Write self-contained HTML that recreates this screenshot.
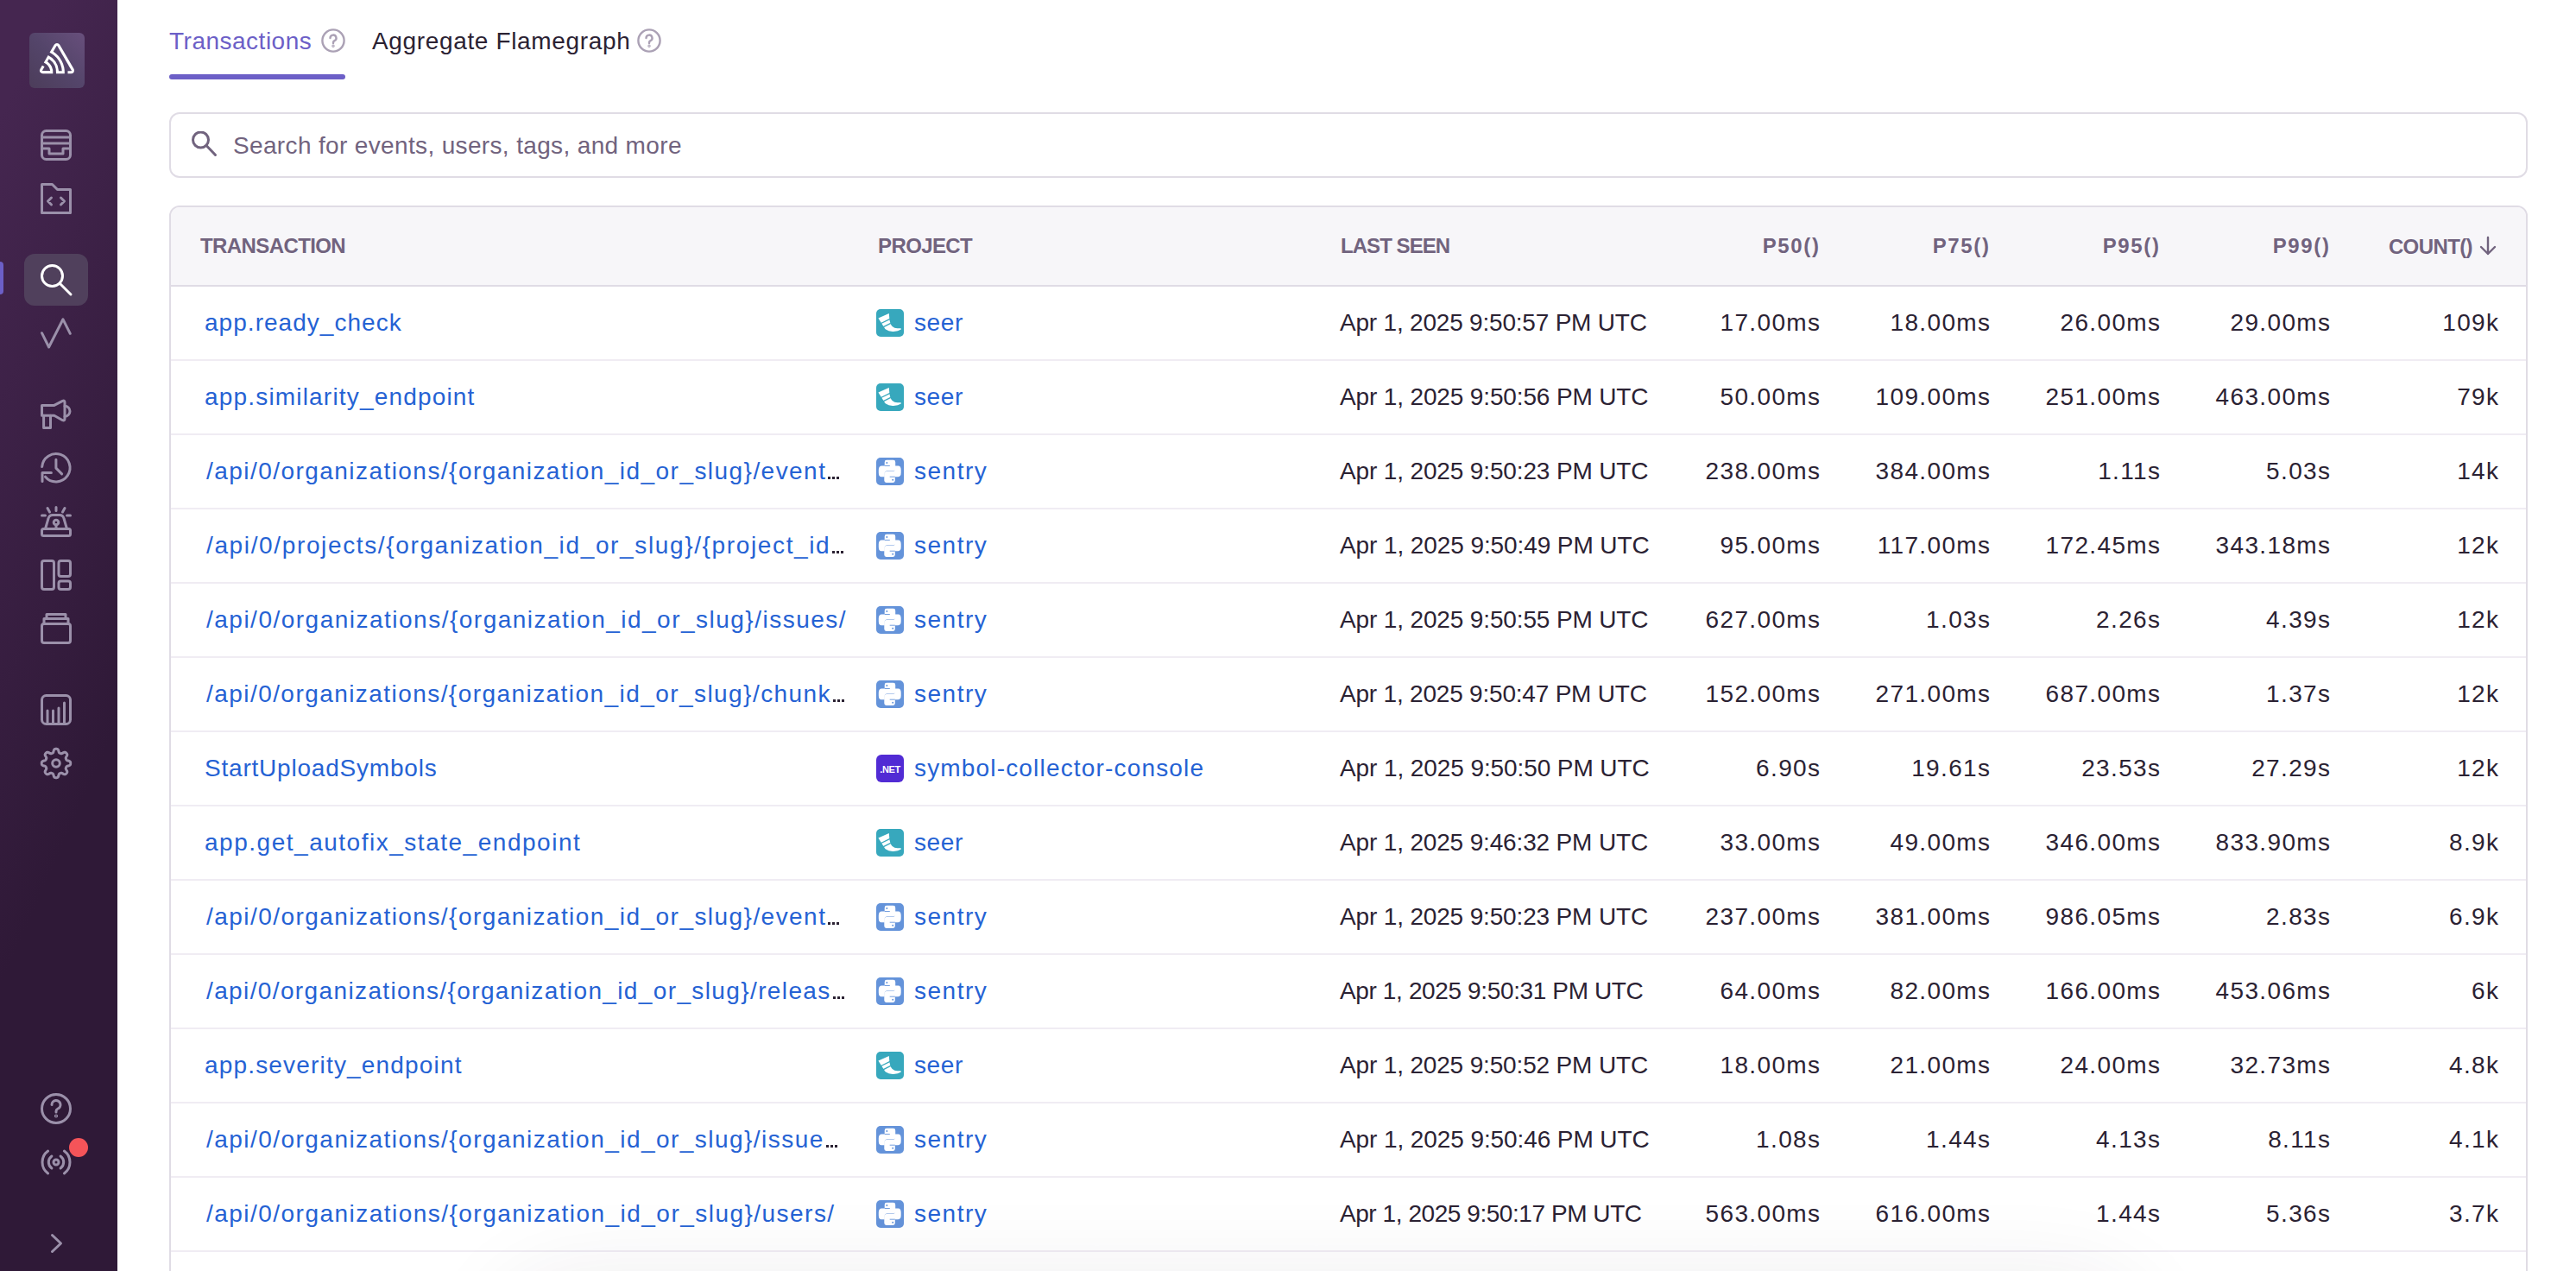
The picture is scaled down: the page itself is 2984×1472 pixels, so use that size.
<!DOCTYPE html>
<html><head><meta charset="utf-8">
<style>
*{box-sizing:border-box;margin:0;padding:0}
html,body{width:2984px;height:1472px;overflow:hidden;background:#fff;font-family:"Liberation Sans",sans-serif;}
@media (max-width:2200px){html{zoom:0.5}}
#sb{position:absolute;left:0;top:0;width:136px;height:1472px;overflow:hidden;background:linear-gradient(294.17deg,#2f1937 35.57%,#452650 92.42%);}
#sb .ic{position:absolute;left:47px;width:36px;height:36px;}
#sb svg{display:block;overflow:visible}
.tab{position:absolute;font-size:28px;line-height:28px;white-space:nowrap}
.help{position:absolute}
#search{position:absolute;left:196px;top:130px;width:2732px;height:76px;border:2px solid #E0DCE5;border-radius:12px;background:#fff}
#search .ph{position:absolute;left:72px;top:17px;font-size:28px;line-height:40px;color:#71637E;white-space:nowrap;letter-spacing:0.35px}
#tbl{position:absolute;left:196px;top:238px;width:2732px;height:1400px;border:2px solid #E0DCE5;border-radius:12px;overflow:hidden}
#hdr{position:absolute;left:0;top:0;width:100%;height:92px;background:#F7F6F9;border-bottom:2px solid #E0DCE5}
.h{position:absolute;top:33px;font-size:24px;line-height:24px;font-weight:700;color:#71637E;white-space:nowrap;letter-spacing:-0.6px}
.row{position:absolute;left:0;width:100%;height:86px;border-bottom:2px solid #F0ECF3}
.pi{position:absolute;top:26px;width:32px;height:32px}
.pi svg{display:block}
.c{position:absolute;top:22px;font-size:28px;line-height:40px;white-space:nowrap;color:#2B2233}
.lnk{color:#2562D4}

.ell{display:inline-block;width:14px;height:3px;margin-left:2px;letter-spacing:0;background:repeating-linear-gradient(90deg,#2B2233 0 3px,transparent 3px 5.2px)}
.date{letter-spacing:-0.25px}
.num{letter-spacing:1.35px;margin-right:-1.35px}
</style></head><body>
<div id="sb"><div style="position:absolute;left:34px;top:38px;width:64px;height:64px;border-radius:6px;background:linear-gradient(to top right,#4C3D5A 0%,#54456A 50%,#684F7C 100%)"></div><svg style="position:absolute;left:46px;top:50px" width="40" height="35.2" viewBox="0 0 50 44"><path fill="#fff" d="M29,2.26a4.67,4.67,0,0,0-8,0L14.42,13.53A32.21,32.21,0,0,1,32.17,40.19H27.55A27.68,27.68,0,0,0,12.09,17.47L6,28a15.92,15.92,0,0,1,9.23,12.170H4.62A.76.76,0,0,1,4,39.06l2.94-5a10.74,10.74,0,0,0-3.36-1.9l-2.91,5a4.54,4.54,0,0,0,1.690,6.24A4.66,4.66,0,0,0,4.62,44H19.15a19.4,19.4,0,0,0-8-17.31l2.31-4A23.87,23.87,0,0,1,23.76,44H36.07a35.88,35.88,0,0,0-16.41-31.8l4.67-8a.77.77,0,0,1,1.05-.27c.53.29,20.290,34.77,20.66,35.17a.76.76,0,0,1-.68,1.13H40.6q.09,1.91,0,3.81h4.78A4.59,4.59,0,0,0,50,39.43a4.49,4.49,0,0,0-.62-2.28Z"/></svg><div class="ic" style="top:150px;left:47px;width:36px;height:36px"><svg width="36" height="36" viewBox="0 0 36 36" fill="none" stroke="#9B90AA" stroke-width="3" stroke-linecap="round" stroke-linejoin="round"><rect x="1.5" y="1.5" width="33" height="33" rx="5"/><path d="M1.5 9h33M1.5 16h33M1.5 22h8.5v6h16v-6h8.5"/></svg></div><div class="ic" style="top:212px;left:47px;width:36px;height:36px"><svg width="36" height="36" viewBox="0 0 36 36" fill="none" stroke="#9B90AA" stroke-width="3" stroke-linecap="round" stroke-linejoin="round"><path d="M1.5 34.5V1.5h12l6 6h15v27z"/><path d="M12.5 17l-4 4 4 4M23.5 17l4 4-4 4"/></svg></div><div style="position:absolute;left:28px;top:294px;width:74px;height:60px;border-radius:12px;background:#50405C"></div><div style="position:absolute;left:-4px;top:303px;width:8px;height:38px;border-radius:4px;background:#6C5FC7"></div><div class="ic" style="top:306px;left:47px"><svg width="36" height="36" viewBox="0 0 36 36" fill="none" stroke="#fff" stroke-width="3" stroke-linecap="round"><circle cx="13.5" cy="13.5" r="12"/><path d="M22.5 22.5l12.5 12.5"/></svg></div><div class="ic" style="top:368px;left:47px;width:36px;height:36px"><svg width="36" height="36" viewBox="0 0 36 36" fill="none" stroke="#9B90AA" stroke-width="3" stroke-linecap="round" stroke-linejoin="round"><path d="M1.5 17.7L9.6 34L26 1.8L34.3 18.3"/></svg></div><div class="ic" style="top:462px;left:47px;width:36px;height:36px"><svg width="36" height="36" viewBox="0 0 36 36" fill="none" stroke="#9B90AA" stroke-width="3" stroke-linecap="round" stroke-linejoin="round"><path d="M1.5 7.4H15.8L25.5 2.4Q28 1.4 28 4V23Q28 25.6 25.5 24.7L15.8 19.2H1.5Z"/><path d="M28 8.2A6 6 0 0 1 28 20.2"/><path d="M3.6 19.2V33.5H11.5V19.2"/></svg></div><div class="ic" style="top:524px;left:47px;width:36px;height:36px"><svg width="36" height="36" viewBox="0 0 36 36" fill="none" stroke="#9B90AA" stroke-width="3" stroke-linecap="round" stroke-linejoin="round"><path d="M1.7 16.5A16.2 16.2 0 1 1 5.5 28.2"/><path d="M2 33.5V23.5H12.4"/><path d="M17.9 8.2V18.1L24.6 24.9"/></svg></div><div class="ic" style="top:586px;left:47px;width:36px;height:36px"><svg width="36" height="36" viewBox="0 0 36 36" fill="none" stroke="#9B90AA" stroke-width="3" stroke-linecap="round" stroke-linejoin="round"><path d="M1.5 11h4M30.5 11h4M8 2.5l2.5 4.5M28 2.5l-2.5 4.5M18 1.5v4"/><path d="M5.5 26.5L9 14.5Q10 10.5 14 10.5h8q4 0 5 4l3.5 12"/><rect x="1.5" y="26.5" width="33" height="8" rx="2"/><circle cx="18" cy="19" r="2.8"/><path d="M18 21.8V26.5"/></svg></div><div class="ic" style="top:648px;left:47px;width:36px;height:36px"><svg width="36" height="36" viewBox="0 0 36 36" fill="none" stroke="#9B90AA" stroke-width="3" stroke-linecap="round" stroke-linejoin="round"><rect x="1.5" y="1.5" width="14" height="33" rx="2.5"/><rect x="21" y="1.5" width="13.5" height="18" rx="2.5"/><rect x="21" y="25" width="13.5" height="9.5" rx="2.5"/></svg></div><div class="ic" style="top:710px;left:47px;width:36px;height:36px"><svg width="36" height="36" viewBox="0 0 36 36" fill="none" stroke="#9B90AA" stroke-width="3" stroke-linecap="round" stroke-linejoin="round"><rect x="1.5" y="12.5" width="33" height="22" rx="2.5"/><path d="M4 12.5V6.5h28v6M7 6.5V1.5h22v5"/></svg></div><div class="ic" style="top:804px;left:47px;width:36px;height:36px"><svg width="36" height="36" viewBox="0 0 36 36" fill="none" stroke="#9B90AA" stroke-width="3" stroke-linecap="round" stroke-linejoin="round"><rect x="1.5" y="1.5" width="33" height="33" rx="5"/><path d="M8 33v-14M14.5 33v-14M21 33v-17M27.5 33V10"/></svg></div><div class="ic" style="top:866px;left:47px;width:36px;height:36px"><svg width="36" height="36" viewBox="0 0 36 36" fill="none" stroke="#9B90AA" stroke-width="3" stroke-linecap="round" stroke-linejoin="round"><path d="M18.00 1.30 L18.44 1.32 L18.87 1.36 L19.30 1.46 L19.72 1.64 L20.11 1.95 L20.46 2.47 L20.74 3.24 L20.95 4.12 L21.15 4.89 L21.37 5.43 L21.62 5.78 L21.90 6.01 L22.19 6.18 L22.48 6.32 L22.78 6.45 L23.09 6.57 L23.40 6.68 L23.73 6.76 L24.08 6.80 L24.51 6.73 L25.04 6.51 L25.73 6.10 L26.50 5.63 L27.24 5.28 L27.86 5.16 L28.35 5.21 L28.77 5.39 L29.15 5.62 L29.49 5.89 L29.81 6.19 L30.11 6.51 L30.38 6.85 L30.61 7.23 L30.79 7.65 L30.84 8.14 L30.72 8.76 L30.37 9.50 L29.90 10.27 L29.49 10.96 L29.27 11.49 L29.20 11.92 L29.24 12.27 L29.32 12.60 L29.43 12.91 L29.55 13.22 L29.68 13.52 L29.82 13.81 L29.99 14.10 L30.22 14.38 L30.57 14.63 L31.11 14.85 L31.88 15.05 L32.76 15.26 L33.53 15.54 L34.05 15.89 L34.36 16.28 L34.54 16.70 L34.64 17.13 L34.68 17.56 L34.70 18.00 L34.68 18.44 L34.64 18.87 L34.54 19.30 L34.36 19.72 L34.05 20.11 L33.53 20.46 L32.76 20.74 L31.88 20.95 L31.11 21.15 L30.57 21.37 L30.22 21.62 L29.99 21.90 L29.82 22.19 L29.68 22.48 L29.55 22.78 L29.43 23.09 L29.32 23.40 L29.24 23.73 L29.20 24.08 L29.27 24.51 L29.49 25.04 L29.90 25.73 L30.37 26.50 L30.72 27.24 L30.84 27.86 L30.79 28.35 L30.61 28.77 L30.38 29.15 L30.11 29.49 L29.81 29.81 L29.49 30.11 L29.15 30.38 L28.77 30.61 L28.35 30.79 L27.86 30.84 L27.24 30.72 L26.50 30.37 L25.73 29.90 L25.04 29.49 L24.51 29.27 L24.08 29.20 L23.73 29.24 L23.40 29.32 L23.09 29.43 L22.78 29.55 L22.48 29.68 L22.19 29.82 L21.90 29.99 L21.62 30.22 L21.37 30.57 L21.15 31.11 L20.95 31.88 L20.74 32.76 L20.46 33.53 L20.11 34.05 L19.72 34.36 L19.30 34.54 L18.87 34.64 L18.44 34.68 L18.00 34.70 L17.56 34.68 L17.13 34.64 L16.70 34.54 L16.28 34.36 L15.89 34.05 L15.54 33.53 L15.26 32.76 L15.05 31.88 L14.85 31.11 L14.63 30.57 L14.38 30.22 L14.10 29.99 L13.81 29.82 L13.52 29.68 L13.22 29.55 L12.91 29.43 L12.60 29.32 L12.27 29.24 L11.92 29.20 L11.49 29.27 L10.96 29.49 L10.27 29.90 L9.50 30.37 L8.76 30.72 L8.14 30.84 L7.65 30.79 L7.23 30.61 L6.85 30.38 L6.51 30.11 L6.19 29.81 L5.89 29.49 L5.62 29.15 L5.39 28.77 L5.21 28.35 L5.16 27.86 L5.28 27.24 L5.63 26.50 L6.10 25.73 L6.51 25.04 L6.73 24.51 L6.80 24.08 L6.76 23.73 L6.68 23.40 L6.57 23.09 L6.45 22.78 L6.32 22.48 L6.18 22.19 L6.01 21.90 L5.78 21.62 L5.43 21.37 L4.89 21.15 L4.12 20.95 L3.24 20.74 L2.47 20.46 L1.95 20.11 L1.64 19.72 L1.46 19.30 L1.36 18.87 L1.32 18.44 L1.30 18.00 L1.32 17.56 L1.36 17.13 L1.46 16.70 L1.64 16.28 L1.95 15.89 L2.47 15.54 L3.24 15.26 L4.12 15.05 L4.89 14.85 L5.43 14.63 L5.78 14.38 L6.01 14.10 L6.18 13.81 L6.32 13.52 L6.45 13.22 L6.57 12.91 L6.68 12.60 L6.76 12.27 L6.80 11.92 L6.73 11.49 L6.51 10.96 L6.10 10.27 L5.63 9.50 L5.28 8.76 L5.16 8.14 L5.21 7.65 L5.39 7.23 L5.62 6.85 L5.89 6.51 L6.19 6.19 L6.51 5.89 L6.85 5.62 L7.23 5.39 L7.65 5.21 L8.14 5.16 L8.76 5.28 L9.50 5.63 L10.27 6.10 L10.96 6.51 L11.49 6.73 L11.92 6.80 L12.27 6.76 L12.60 6.68 L12.91 6.57 L13.22 6.45 L13.52 6.32 L13.81 6.18 L14.10 6.01 L14.38 5.78 L14.63 5.43 L14.85 4.89 L15.05 4.12 L15.26 3.24 L15.54 2.47 L15.89 1.95 L16.28 1.64 L16.70 1.46 L17.13 1.36 L17.56 1.32Z"/><circle cx="18" cy="18" r="4.3"/></svg></div><div class="ic" style="top:1266px;left:47px;width:36px;height:36px"><svg width="36" height="36" viewBox="0 0 36 36" fill="none" stroke="#9B90AA" stroke-width="3" stroke-linecap="round" stroke-linejoin="round"><circle cx="18" cy="18" r="16.5"/><path d="M13 13.5a5 5 0 1 1 7 4.5c-1.5.7-2 1.5-2 3v1"/><circle cx="18" cy="26.5" r="0.6" fill="#9B90AA"/></svg></div><div class="ic" style="top:1328px;left:47px;width:36px;height:36px"><svg width="36" height="36" viewBox="0 0 36 36" fill="none" stroke="#9B90AA" stroke-width="3" stroke-linecap="round" stroke-linejoin="round"><circle cx="18" cy="18" r="3"/><path d="M12.89 10.96A8.7 8.7 0 0 0 12.89 25.04 M23.11 10.96A8.7 8.7 0 0 1 23.11 25.04 M8.60 5.06A16 16 0 0 0 8.60 30.94 M27.40 5.06A16 16 0 0 1 27.40 30.94"/></svg></div><div style="position:absolute;left:80px;top:1318px;width:22px;height:22px;border-radius:50%;background:#F55459"></div><svg style="position:absolute;left:56px;top:1426px" width="20" height="28" viewBox="0 0 20 28" fill="none" stroke="#9B90AA" stroke-width="3" stroke-linecap="round" stroke-linejoin="round"><path d="M4.5 4.5l10 9.5-10 9.5"/></svg></div>
<div class="tab" style="left:196px;top:34px;color:#6C5FC7;letter-spacing:0.5px">Transactions</div>
<svg class="help" style="left:372px;top:33px" width="28" height="28" viewBox="0 0 28 28" fill="none" stroke="#ABA1B5" stroke-width="2.4" stroke-linecap="round"><circle cx="14" cy="14" r="12.6"/><path d="M10.5 11a3.5 3.5 0 1 1 5 3.2c-1 .5-1.5 1.1-1.5 2.2v.6"/><circle cx="14" cy="20.2" r="0.5" fill="#ABA1B5"/></svg>
<div class="tab" style="left:431px;top:34px;color:#2B2233;letter-spacing:0.65px">Aggregate Flamegraph</div>
<svg class="help" style="left:738px;top:33px" width="28" height="28" viewBox="0 0 28 28" fill="none" stroke="#ABA1B5" stroke-width="2.4" stroke-linecap="round"><circle cx="14" cy="14" r="12.6"/><path d="M10.5 11a3.5 3.5 0 1 1 5 3.2c-1 .5-1.5 1.1-1.5 2.2v.6"/><circle cx="14" cy="20.2" r="0.5" fill="#ABA1B5"/></svg>
<div style="position:absolute;left:196px;top:86px;width:204px;height:6px;border-radius:3px;background:#6C5FC7"></div>
<div id="search"><svg style="position:absolute;left:24px;top:20px" width="32" height="32" viewBox="0 0 32 32" fill="none" stroke="#71637E" stroke-width="3" stroke-linecap="round"><circle cx="10.5" cy="10" r="9"/><path d="M17 16.5l10.5 11"/></svg><div class="ph">Search for events, users, tags, and more</div></div>
<div id="shadow" style="position:absolute;left:600px;top:1505px;width:1860px;height:200px;border-radius:60px;box-shadow:0 0 110px 20px rgba(43,34,51,0.09);z-index:5"></div>
<div id="tbl"><div id="hdr"><div class="h" style="left:34px">TRANSACTION</div><div class="h" style="left:819px">PROJECT</div><div class="h" style="left:1355px;letter-spacing:-0.95px">LAST SEEN</div><div class="h" style="right:819px;letter-spacing:1.65px;margin-right:-1.65px">P50()</div><div class="h" style="right:622px;letter-spacing:1.65px;margin-right:-1.65px">P75()</div><div class="h" style="right:425px;letter-spacing:1.65px;margin-right:-1.65px">P95()</div><div class="h" style="right:228px;letter-spacing:1.65px;margin-right:-1.65px">P99()</div><div class="h" style="right:32px">COUNT()<svg width="24" height="24" viewBox="0 0 24 24" style="display:inline-block;vertical-align:-3px;margin-left:6px"><path d="M12 2v19M4 13l8 8 8-8" fill="none" stroke="#71637E" stroke-width="2.4" stroke-linecap="round" stroke-linejoin="round"/></svg></div></div><div class="row" style="top:92px"><div class="c lnk" style="left:39px;letter-spacing:1.036px">app.ready_check</div><div class="pi" style="left:817px"><svg width="32" height="32" viewBox="0 0 32 32"><rect width="32" height="32" rx="5" fill="#37A8BD"/><path d="M2.4 10.4 L14.8 5 L15.4 11.8 Q16 17.5 18.6 20 Q21 22.3 24.5 22.3 L28.6 22.2 L28.8 23.4 Q25.5 25.6 20 25.9 Q14.5 26.2 11 23.5 Q9.8 22.5 9.4 21.6 Z" fill="#fff"/><path d="M5.6 16.5 L16 11.4 M7.9 20.9 L16.8 16.4" stroke="#37A8BD" stroke-width="1.3"/></svg></div><div class="c lnk proj" style="left:861px;letter-spacing:0.6px">seer</div><div class="c date" style="left:1354px;letter-spacing:-0.206px">Apr 1, 2025 9:50:57 PM UTC</div><div class="c num" style="right:818px">17.00ms</div><div class="c num" style="right:621px">18.00ms</div><div class="c num" style="right:424px">26.00ms</div><div class="c num" style="right:227px">29.00ms</div><div class="c num" style="right:32px">109k</div></div><div class="row" style="top:178px"><div class="c lnk" style="left:39px;letter-spacing:1.182px">app.similarity_endpoint</div><div class="pi" style="left:817px"><svg width="32" height="32" viewBox="0 0 32 32"><rect width="32" height="32" rx="5" fill="#37A8BD"/><path d="M2.4 10.4 L14.8 5 L15.4 11.8 Q16 17.5 18.6 20 Q21 22.3 24.5 22.3 L28.6 22.2 L28.8 23.4 Q25.5 25.6 20 25.9 Q14.5 26.2 11 23.5 Q9.8 22.5 9.4 21.6 Z" fill="#fff"/><path d="M5.6 16.5 L16 11.4 M7.9 20.9 L16.8 16.4" stroke="#37A8BD" stroke-width="1.3"/></svg></div><div class="c lnk proj" style="left:861px;letter-spacing:0.6px">seer</div><div class="c date" style="left:1354px;letter-spacing:-0.142px">Apr 1, 2025 9:50:56 PM UTC</div><div class="c num" style="right:818px">50.00ms</div><div class="c num" style="right:621px">109.00ms</div><div class="c num" style="right:424px">251.00ms</div><div class="c num" style="right:227px">463.00ms</div><div class="c num" style="right:32px">79k</div></div><div class="row" style="top:264px"><div class="c lnk api" style="left:41px;letter-spacing:1.451px">/api/0/organizations/{organization_id_or_slug}/event<span class="ell"></span></div><div class="pi" style="left:817px"><svg width="32" height="32" viewBox="0 0 32 32"><rect width="32" height="32" rx="5" fill="#6493DA"/><g id="py1"><path d="M12 2.8 L19.8 2.8 Q22.2 2.8 22.2 5.2 L22.2 13 Q22.2 15.6 19.6 15.6 L12.4 15.6 Q9.7 15.6 9.7 18.4 L9.7 22.2 L6 22.2 Q2.8 22.2 2.8 17.5 L2.8 14.2 Q2.8 9.5 6.5 9.5 L9.7 9.5 L9.7 5.2 Q9.7 2.8 12 2.8 Z" fill="#fff"/><path d="M9.7 9.5 H15.8" stroke="#6493DA" stroke-width="0.9"/><circle cx="12.3" cy="6" r="1" fill="#6493DA"/></g><use href="#py1" transform="rotate(180 15.75 15.85)"/></svg></div><div class="c lnk proj" style="left:861px;letter-spacing:1.5px">sentry</div><div class="c date" style="left:1354px;letter-spacing:-0.142px">Apr 1, 2025 9:50:23 PM UTC</div><div class="c num" style="right:818px">238.00ms</div><div class="c num" style="right:621px">384.00ms</div><div class="c num" style="right:424px">1.11s</div><div class="c num" style="right:227px">5.03s</div><div class="c num" style="right:32px">14k</div></div><div class="row" style="top:350px"><div class="c lnk api" style="left:41px;letter-spacing:1.635px">/api/0/projects/{organization_id_or_slug}/{project_id<span class="ell"></span></div><div class="pi" style="left:817px"><svg width="32" height="32" viewBox="0 0 32 32"><rect width="32" height="32" rx="5" fill="#6493DA"/><g id="py2"><path d="M12 2.8 L19.8 2.8 Q22.2 2.8 22.2 5.2 L22.2 13 Q22.2 15.6 19.6 15.6 L12.4 15.6 Q9.7 15.6 9.7 18.4 L9.7 22.2 L6 22.2 Q2.8 22.2 2.8 17.5 L2.8 14.2 Q2.8 9.5 6.5 9.5 L9.7 9.5 L9.7 5.2 Q9.7 2.8 12 2.8 Z" fill="#fff"/><path d="M9.7 9.5 H15.8" stroke="#6493DA" stroke-width="0.9"/><circle cx="12.3" cy="6" r="1" fill="#6493DA"/></g><use href="#py2" transform="rotate(180 15.75 15.85)"/></svg></div><div class="c lnk proj" style="left:861px;letter-spacing:1.5px">sentry</div><div class="c date" style="left:1354px;letter-spacing:-0.094px">Apr 1, 2025 9:50:49 PM UTC</div><div class="c num" style="right:818px">95.00ms</div><div class="c num" style="right:621px">117.00ms</div><div class="c num" style="right:424px">172.45ms</div><div class="c num" style="right:227px">343.18ms</div><div class="c num" style="right:32px">12k</div></div><div class="row" style="top:436px"><div class="c lnk api" style="left:41px;letter-spacing:1.491px">/api/0/organizations/{organization_id_or_slug}/issues/</div><div class="pi" style="left:817px"><svg width="32" height="32" viewBox="0 0 32 32"><rect width="32" height="32" rx="5" fill="#6493DA"/><g id="py3"><path d="M12 2.8 L19.8 2.8 Q22.2 2.8 22.2 5.2 L22.2 13 Q22.2 15.6 19.6 15.6 L12.4 15.6 Q9.7 15.6 9.7 18.4 L9.7 22.2 L6 22.2 Q2.8 22.2 2.8 17.5 L2.8 14.2 Q2.8 9.5 6.5 9.5 L9.7 9.5 L9.7 5.2 Q9.7 2.8 12 2.8 Z" fill="#fff"/><path d="M9.7 9.5 H15.8" stroke="#6493DA" stroke-width="0.9"/><circle cx="12.3" cy="6" r="1" fill="#6493DA"/></g><use href="#py3" transform="rotate(180 15.75 15.85)"/></svg></div><div class="c lnk proj" style="left:861px;letter-spacing:1.5px">sentry</div><div class="c date" style="left:1354px;letter-spacing:-0.142px">Apr 1, 2025 9:50:55 PM UTC</div><div class="c num" style="right:818px">627.00ms</div><div class="c num" style="right:621px">1.03s</div><div class="c num" style="right:424px">2.26s</div><div class="c num" style="right:227px">4.39s</div><div class="c num" style="right:32px">12k</div></div><div class="row" style="top:522px"><div class="c lnk api" style="left:41px;letter-spacing:1.441px">/api/0/organizations/{organization_id_or_slug}/chunk<span class="ell"></span></div><div class="pi" style="left:817px"><svg width="32" height="32" viewBox="0 0 32 32"><rect width="32" height="32" rx="5" fill="#6493DA"/><g id="py4"><path d="M12 2.8 L19.8 2.8 Q22.2 2.8 22.2 5.2 L22.2 13 Q22.2 15.6 19.6 15.6 L12.4 15.6 Q9.7 15.6 9.7 18.4 L9.7 22.2 L6 22.2 Q2.8 22.2 2.8 17.5 L2.8 14.2 Q2.8 9.5 6.5 9.5 L9.7 9.5 L9.7 5.2 Q9.7 2.8 12 2.8 Z" fill="#fff"/><path d="M9.7 9.5 H15.8" stroke="#6493DA" stroke-width="0.9"/><circle cx="12.3" cy="6" r="1" fill="#6493DA"/></g><use href="#py4" transform="rotate(180 15.75 15.85)"/></svg></div><div class="c lnk proj" style="left:861px;letter-spacing:1.5px">sentry</div><div class="c date" style="left:1354px;letter-spacing:-0.206px">Apr 1, 2025 9:50:47 PM UTC</div><div class="c num" style="right:818px">152.00ms</div><div class="c num" style="right:621px">271.00ms</div><div class="c num" style="right:424px">687.00ms</div><div class="c num" style="right:227px">1.37s</div><div class="c num" style="right:32px">12k</div></div><div class="row" style="top:608px"><div class="c lnk" style="left:39px;letter-spacing:0.794px">StartUploadSymbols</div><div class="pi" style="left:817px"><svg width="32" height="32" viewBox="0 0 32 32"><rect width="32" height="32" rx="6" fill="#512BD4"/><text x="16" y="20.5" text-anchor="middle" font-family="Liberation Sans" font-size="11" font-weight="700" fill="#fff" letter-spacing="-0.4">.NET</text></svg></div><div class="c lnk proj" style="left:861px;letter-spacing:1.17px">symbol-collector-console</div><div class="c date" style="left:1354px;letter-spacing:-0.094px">Apr 1, 2025 9:50:50 PM UTC</div><div class="c num" style="right:818px">6.90s</div><div class="c num" style="right:621px">19.61s</div><div class="c num" style="right:424px">23.53s</div><div class="c num" style="right:227px">27.29s</div><div class="c num" style="right:32px">12k</div></div><div class="row" style="top:694px"><div class="c lnk" style="left:39px;letter-spacing:1.517px">app.get_autofix_state_endpoint</div><div class="pi" style="left:817px"><svg width="32" height="32" viewBox="0 0 32 32"><rect width="32" height="32" rx="5" fill="#37A8BD"/><path d="M2.4 10.4 L14.8 5 L15.4 11.8 Q16 17.5 18.6 20 Q21 22.3 24.5 22.3 L28.6 22.2 L28.8 23.4 Q25.5 25.6 20 25.9 Q14.5 26.2 11 23.5 Q9.8 22.5 9.4 21.6 Z" fill="#fff"/><path d="M5.6 16.5 L16 11.4 M7.9 20.9 L16.8 16.4" stroke="#37A8BD" stroke-width="1.3"/></svg></div><div class="c lnk proj" style="left:861px;letter-spacing:0.6px">seer</div><div class="c date" style="left:1354px;letter-spacing:-0.158px">Apr 1, 2025 9:46:32 PM UTC</div><div class="c num" style="right:818px">33.00ms</div><div class="c num" style="right:621px">49.00ms</div><div class="c num" style="right:424px">346.00ms</div><div class="c num" style="right:227px">833.90ms</div><div class="c num" style="right:32px">8.9k</div></div><div class="row" style="top:780px"><div class="c lnk api" style="left:41px;letter-spacing:1.451px">/api/0/organizations/{organization_id_or_slug}/event<span class="ell"></span></div><div class="pi" style="left:817px"><svg width="32" height="32" viewBox="0 0 32 32"><rect width="32" height="32" rx="5" fill="#6493DA"/><g id="py5"><path d="M12 2.8 L19.8 2.8 Q22.2 2.8 22.2 5.2 L22.2 13 Q22.2 15.6 19.6 15.6 L12.4 15.6 Q9.7 15.6 9.7 18.4 L9.7 22.2 L6 22.2 Q2.8 22.2 2.8 17.5 L2.8 14.2 Q2.8 9.5 6.5 9.5 L9.7 9.5 L9.7 5.2 Q9.7 2.8 12 2.8 Z" fill="#fff"/><path d="M9.7 9.5 H15.8" stroke="#6493DA" stroke-width="0.9"/><circle cx="12.3" cy="6" r="1" fill="#6493DA"/></g><use href="#py5" transform="rotate(180 15.75 15.85)"/></svg></div><div class="c lnk proj" style="left:861px;letter-spacing:1.5px">sentry</div><div class="c date" style="left:1354px;letter-spacing:-0.158px">Apr 1, 2025 9:50:23 PM UTC</div><div class="c num" style="right:818px">237.00ms</div><div class="c num" style="right:621px">381.00ms</div><div class="c num" style="right:424px">986.05ms</div><div class="c num" style="right:227px">2.83s</div><div class="c num" style="right:32px">6.9k</div></div><div class="row" style="top:866px"><div class="c lnk api" style="left:41px;letter-spacing:1.377px">/api/0/organizations/{organization_id_or_slug}/releas<span class="ell"></span></div><div class="pi" style="left:817px"><svg width="32" height="32" viewBox="0 0 32 32"><rect width="32" height="32" rx="5" fill="#6493DA"/><g id="py6"><path d="M12 2.8 L19.8 2.8 Q22.2 2.8 22.2 5.2 L22.2 13 Q22.2 15.6 19.6 15.6 L12.4 15.6 Q9.7 15.6 9.7 18.4 L9.7 22.2 L6 22.2 Q2.8 22.2 2.8 17.5 L2.8 14.2 Q2.8 9.5 6.5 9.5 L9.7 9.5 L9.7 5.2 Q9.7 2.8 12 2.8 Z" fill="#fff"/><path d="M9.7 9.5 H15.8" stroke="#6493DA" stroke-width="0.9"/><circle cx="12.3" cy="6" r="1" fill="#6493DA"/></g><use href="#py6" transform="rotate(180 15.75 15.85)"/></svg></div><div class="c lnk proj" style="left:861px;letter-spacing:1.5px">sentry</div><div class="c date" style="left:1354px;letter-spacing:-0.370px">Apr 1, 2025 9:50:31 PM UTC</div><div class="c num" style="right:818px">64.00ms</div><div class="c num" style="right:621px">82.00ms</div><div class="c num" style="right:424px">166.00ms</div><div class="c num" style="right:227px">453.06ms</div><div class="c num" style="right:32px">6k</div></div><div class="row" style="top:952px"><div class="c lnk" style="left:39px;letter-spacing:1.175px">app.severity_endpoint</div><div class="pi" style="left:817px"><svg width="32" height="32" viewBox="0 0 32 32"><rect width="32" height="32" rx="5" fill="#37A8BD"/><path d="M2.4 10.4 L14.8 5 L15.4 11.8 Q16 17.5 18.6 20 Q21 22.3 24.5 22.3 L28.6 22.2 L28.8 23.4 Q25.5 25.6 20 25.9 Q14.5 26.2 11 23.5 Q9.8 22.5 9.4 21.6 Z" fill="#fff"/><path d="M5.6 16.5 L16 11.4 M7.9 20.9 L16.8 16.4" stroke="#37A8BD" stroke-width="1.3"/></svg></div><div class="c lnk proj" style="left:861px;letter-spacing:0.6px">seer</div><div class="c date" style="left:1354px;letter-spacing:-0.158px">Apr 1, 2025 9:50:52 PM UTC</div><div class="c num" style="right:818px">18.00ms</div><div class="c num" style="right:621px">21.00ms</div><div class="c num" style="right:424px">24.00ms</div><div class="c num" style="right:227px">32.73ms</div><div class="c num" style="right:32px">4.8k</div></div><div class="row" style="top:1038px"><div class="c lnk api" style="left:41px;letter-spacing:1.461px">/api/0/organizations/{organization_id_or_slug}/issue<span class="ell"></span></div><div class="pi" style="left:817px"><svg width="32" height="32" viewBox="0 0 32 32"><rect width="32" height="32" rx="5" fill="#6493DA"/><g id="py7"><path d="M12 2.8 L19.8 2.8 Q22.2 2.8 22.2 5.2 L22.2 13 Q22.2 15.6 19.6 15.6 L12.4 15.6 Q9.7 15.6 9.7 18.4 L9.7 22.2 L6 22.2 Q2.8 22.2 2.8 17.5 L2.8 14.2 Q2.8 9.5 6.5 9.5 L9.7 9.5 L9.7 5.2 Q9.7 2.8 12 2.8 Z" fill="#fff"/><path d="M9.7 9.5 H15.8" stroke="#6493DA" stroke-width="0.9"/><circle cx="12.3" cy="6" r="1" fill="#6493DA"/></g><use href="#py7" transform="rotate(180 15.75 15.85)"/></svg></div><div class="c lnk proj" style="left:861px;letter-spacing:1.5px">sentry</div><div class="c date" style="left:1354px;letter-spacing:-0.094px">Apr 1, 2025 9:50:46 PM UTC</div><div class="c num" style="right:818px">1.08s</div><div class="c num" style="right:621px">1.44s</div><div class="c num" style="right:424px">4.13s</div><div class="c num" style="right:227px">8.11s</div><div class="c num" style="right:32px">4.1k</div></div><div class="row" style="top:1124px"><div class="c lnk api" style="left:41px;letter-spacing:1.471px">/api/0/organizations/{organization_id_or_slug}/users/</div><div class="pi" style="left:817px"><svg width="32" height="32" viewBox="0 0 32 32"><rect width="32" height="32" rx="5" fill="#6493DA"/><g id="py8"><path d="M12 2.8 L19.8 2.8 Q22.2 2.8 22.2 5.2 L22.2 13 Q22.2 15.6 19.6 15.6 L12.4 15.6 Q9.7 15.6 9.7 18.4 L9.7 22.2 L6 22.2 Q2.8 22.2 2.8 17.5 L2.8 14.2 Q2.8 9.5 6.5 9.5 L9.7 9.5 L9.7 5.2 Q9.7 2.8 12 2.8 Z" fill="#fff"/><path d="M9.7 9.5 H15.8" stroke="#6493DA" stroke-width="0.9"/><circle cx="12.3" cy="6" r="1" fill="#6493DA"/></g><use href="#py8" transform="rotate(180 15.75 15.85)"/></svg></div><div class="c lnk proj" style="left:861px;letter-spacing:1.5px">sentry</div><div class="c date" style="left:1354px;letter-spacing:-0.442px">Apr 1, 2025 9:50:17 PM UTC</div><div class="c num" style="right:818px">563.00ms</div><div class="c num" style="right:621px">616.00ms</div><div class="c num" style="right:424px">1.44s</div><div class="c num" style="right:227px">5.36s</div><div class="c num" style="right:32px">3.7k</div></div></div>
</body></html>
